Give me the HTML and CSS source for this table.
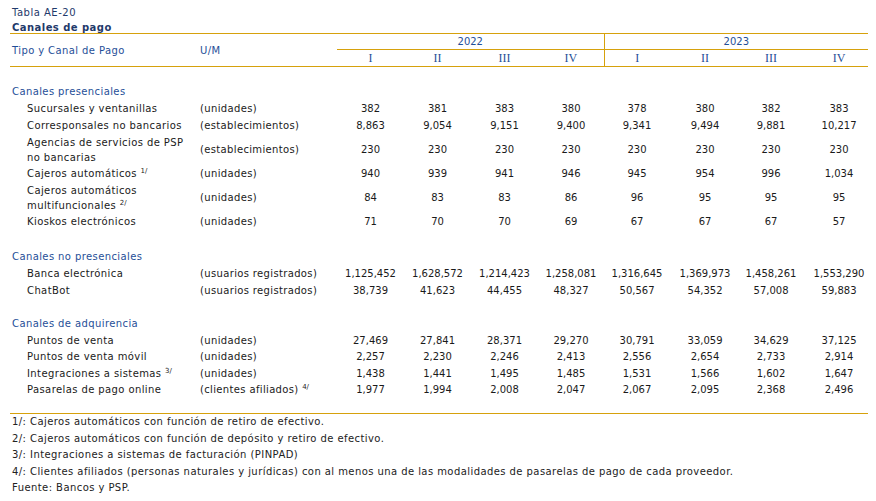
FILE: index.html
```html
<!DOCTYPE html>
<html lang="es">
<head>
<meta charset="utf-8">
<title>Tabla AE-20 Canales de pago</title>
<link rel="stylesheet" href="styles.css">
</head>
<body>
<div class="sheet">
  <div class="title">Tabla AE-20</div>
  <div class="subtitle">Canales de pago</div>
  <table class="data">
    <colgroup>
      <col class="w-label"><col class="w-um">
      <col class="w67"><col class="w67"><col class="w67"><col class="w66">
      <col class="w66"><col class="w66"><col class="w66"><col class="w66">
    </colgroup>
    <thead>
      <tr class="yrow">
        <th rowspan="2" class="h-label">Tipo y Canal de Pago</th>
        <th rowspan="2" class="h-um">U/M</th>
        <th colspan="4" class="year">2022</th>
        <th colspan="4" class="year split">2023</th>
      </tr>
      <tr class="qrow">
        <th>I</th><th>II</th><th>III</th><th>IV</th>
        <th class="split">I</th><th>II</th><th>III</th><th>IV</th>
      </tr>
    </thead>
    <tbody>
      <tr class="gap g16"><td colspan="10"></td></tr>
      <tr class="sec"><td colspan="10">Canales presenciales</td></tr>
      <tr><td class="lbl">Sucursales y ventanillas</td><td class="um">(unidades)</td><td>382</td><td>381</td><td>383</td><td>380</td><td>378</td><td>380</td><td>382</td><td>383</td></tr>
      <tr><td class="lbl">Corresponsales no bancarios</td><td class="um">(establecimientos)</td><td>8,863</td><td>9,054</td><td>9,151</td><td>9,400</td><td>9,341</td><td>9,494</td><td>9,881</td><td>10,217</td></tr>
      <tr class="dbl"><td class="lbl">Agencias de servicios de PSP<br>no bancarias</td><td class="um">(establecimientos)</td><td>230</td><td>230</td><td>230</td><td>230</td><td>230</td><td>230</td><td>230</td><td>230</td></tr>
      <tr><td class="lbl">Cajeros automáticos <sup>1/</sup></td><td class="um">(unidades)</td><td>940</td><td>939</td><td>941</td><td>946</td><td>945</td><td>954</td><td>996</td><td>1,034</td></tr>
      <tr class="dbl"><td class="lbl">Cajeros automáticos<br>multifuncionales <sup>2/</sup></td><td class="um">(unidades)</td><td>84</td><td>83</td><td>83</td><td>86</td><td>96</td><td>95</td><td>95</td><td>95</td></tr>
      <tr><td class="lbl">Kioskos electrónicos</td><td class="um">(unidades)</td><td>71</td><td>70</td><td>70</td><td>69</td><td>67</td><td>67</td><td>67</td><td>57</td></tr>
      <tr class="gap g18"><td colspan="10"></td></tr>
      <tr class="sec"><td colspan="10">Canales no presenciales</td></tr>
      <tr><td class="lbl">Banca electrónica</td><td class="um">(usuarios registrados)</td><td>1,125,452</td><td>1,628,572</td><td>1,214,423</td><td>1,258,081</td><td>1,316,645</td><td>1,369,973</td><td>1,458,261</td><td>1,553,290</td></tr>
      <tr><td class="lbl">ChatBot</td><td class="um">(usuarios registrados)</td><td>38,739</td><td>41,623</td><td>44,455</td><td>48,327</td><td>50,567</td><td>54,352</td><td>57,008</td><td>59,883</td></tr>
      <tr class="gap g16"><td colspan="10"></td></tr>
      <tr class="sec"><td colspan="10">Canales de adquirencia</td></tr>
      <tr class="r16"><td class="lbl">Puntos de venta</td><td class="um">(unidades)</td><td>27,469</td><td>27,841</td><td>28,371</td><td>29,270</td><td>30,791</td><td>33,059</td><td>34,629</td><td>37,125</td></tr>
      <tr><td class="lbl">Puntos de venta móvil</td><td class="um">(unidades)</td><td>2,257</td><td>2,230</td><td>2,246</td><td>2,413</td><td>2,556</td><td>2,654</td><td>2,733</td><td>2,914</td></tr>
      <tr class="r16"><td class="lbl">Integraciones a sistemas <sup>3/</sup></td><td class="um">(unidades)</td><td>1,438</td><td>1,441</td><td>1,495</td><td>1,485</td><td>1,531</td><td>1,566</td><td>1,602</td><td>1,647</td></tr>
      <tr><td class="lbl">Pasarelas de pago online</td><td class="um">(clientes afiliados) <sup>4/</sup></td><td>1,977</td><td>1,994</td><td>2,008</td><td>2,047</td><td>2,067</td><td>2,095</td><td>2,368</td><td>2,496</td></tr>
      <tr class="gap g15 last"><td colspan="10"></td></tr>
    </tbody>
  </table>
  <div class="notes">
    <p>1/: Cajeros automáticos con función de retiro de efectivo.</p>
    <p>2/: Cajeros automáticos con función de depósito y retiro de efectivo.</p>
    <p>3/: Integraciones a sistemas de facturación (PINPAD)</p>
    <p>4/: Clientes afiliados (personas naturales y jurídicas) con al menos una de las modalidades de pasarelas de pago de cada proveedor.</p>
    <p>Fuente: Bancos y PSP.</p>
  </div>
</div>
</body>
</html>
```

FILE: styles.css
```css
html, body {
  margin: 0;
  padding: 0;
  background: #ffffff;
}

body {
  font-family: "DejaVu Sans", Verdana, sans-serif;
  font-size: 10px;
  color: #1a1a1a;
}

.sheet {
  width: 858px;
  margin-left: 10px;
  padding-top: 5px;
}

.title {
  height: 15px;
  line-height: 15px;
  padding-left: 2px;
  color: #1f3a6b;
  letter-spacing: 0.5px;
}

.subtitle {
  height: 13px;
  line-height: 15px;
  padding-left: 2px;
  font-weight: bold;
  color: #1f3a6b;
  letter-spacing: 0.45px;
}

.data {
  width: 858px;
  table-layout: fixed;
  border-collapse: collapse;
  border-spacing: 0;
}

.w-label { width: 188px; }
.w-um { width: 139px; }
.w67 { width: 67px; }
.w66 { width: 66px; }

.data th {
  font-weight: normal;
  color: #1f4f98;
  padding: 0;
  border-bottom: 1px solid #d6a10c;
  border-top: 1px solid #d6a10c;
  white-space: nowrap;
}

.yrow th { height: 15px; line-height: 15px; }
.qrow th {
  height: 16px;
  line-height: 16px;
  font-family: "Liberation Serif", "Times New Roman", serif;
  font-size: 12px;
  text-align: center;
}

.h-label, .h-um {
  text-align: left;
  vertical-align: middle;
  letter-spacing: 0.4px;
}
.h-label { padding-left: 2px !important; }
.h-um { padding-left: 2px !important; }

.year { text-align: center; }
.split { border-left: 1px solid #d6a10c; }

.qrow th:nth-child(6), .qrow th:nth-child(7) { padding-left: 4px; }
.qrow th:nth-child(8) { padding-left: 8px; }

.data td {
  padding: 0;
  height: 17px;
  line-height: 15px;
  text-align: center;
  white-space: nowrap;
  vertical-align: middle;
}

.data tbody tr td:nth-child(8),
.data tbody tr td:nth-child(9) { padding-left: 4px; }
.data tbody tr td:nth-child(10) { padding-left: 8px; }

.data tr.r16 td { height: 16px; }
.data tr.dbl td { height: 31px; }

.data td.lbl {
  text-align: left;
  padding-left: 17px;
  overflow: visible;
  letter-spacing: 0.4px;
}

.data td.um {
  text-align: left;
  padding-left: 2px;
  letter-spacing: 0.35px;
}

.data tr.sec td {
  text-align: left;
  padding-left: 2px;
  color: #1f4f98;
  letter-spacing: 0.4px;
}

.data tr.gap td { padding: 0; }
.data tr.g15 td { height: 15px; }
.data tr.g16 td { height: 16px; }
.data tr.g18 td { height: 18px; }
.data tr.last td { border-bottom: 1px solid #d6a10c; }

sup {
  font-size: 7px;
  line-height: 0;
  vertical-align: 4px;
  letter-spacing: 0;
}

.notes {
  padding-left: 2px;
  color: #222222;
  letter-spacing: 0.43px;
}

.notes p {
  margin: 0;
  height: 16.5px;
  line-height: 16.5px;
}
```
